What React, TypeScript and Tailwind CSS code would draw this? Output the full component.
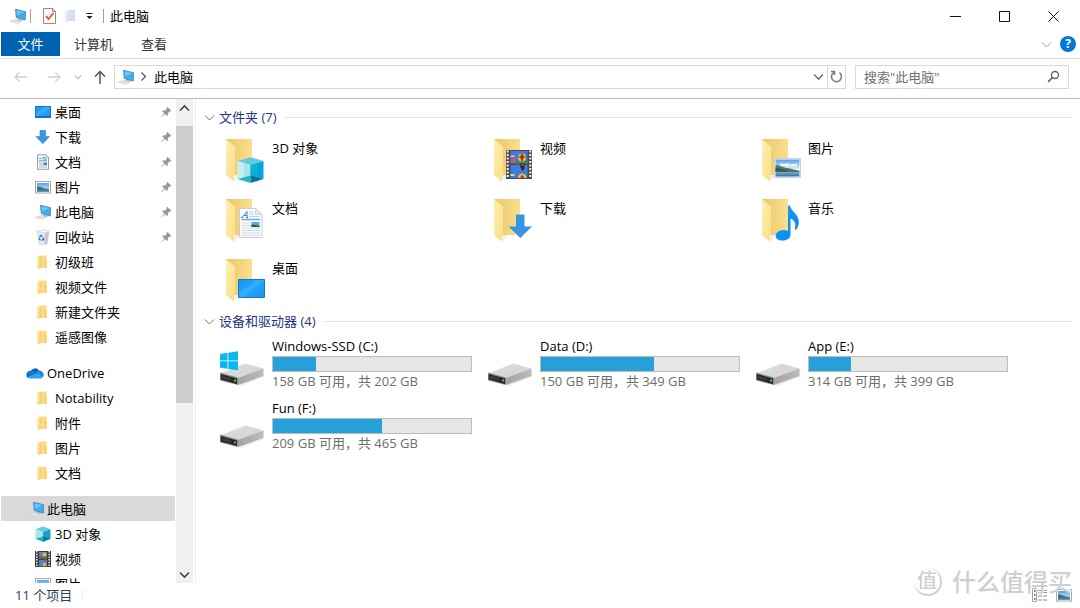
import type { ReactNode } from 'react';

type IconName =
  | 'desktop'
  | 'download'
  | 'document'
  | 'picture'
  | 'pc'
  | 'recycle'
  | 'folder'
  | 'onedrive'
  | 'cube'
  | 'video';

interface NavItem {
  label: string;
  icon: IconName;
  pinned?: boolean;
  root?: boolean;
  selected?: boolean;
}

const NAV_GROUPS: NavItem[][] = [
  [
    { label: '桌面', icon: 'desktop', pinned: true },
    { label: '下载', icon: 'download', pinned: true },
    { label: '文档', icon: 'document', pinned: true },
    { label: '图片', icon: 'picture', pinned: true },
    { label: '此电脑', icon: 'pc', pinned: true },
    { label: '回收站', icon: 'recycle', pinned: true },
    { label: '初级班', icon: 'folder' },
    { label: '视频文件', icon: 'folder' },
    { label: '新建文件夹', icon: 'folder' },
    { label: '遥感图像', icon: 'folder' },
  ],
  [
    { label: 'OneDrive', icon: 'onedrive', root: true },
    { label: 'Notability', icon: 'folder' },
    { label: '附件', icon: 'folder' },
    { label: '图片', icon: 'folder' },
    { label: '文档', icon: 'folder' },
  ],
  [
    { label: '此电脑', icon: 'pc', root: true, selected: true },
    { label: '3D 对象', icon: 'cube' },
    { label: '视频', icon: 'video' },
    { label: '图片', icon: 'picture' },
  ],
];

const DRIVES = [
  { name: 'Windows-SSD (C:)', free: 158, total: 202, system: true },
  { name: 'Data (D:)', free: 150, total: 349 },
  { name: 'App (E:)', free: 314, total: 399 },
  { name: 'Fun (F:)', free: 209, total: 465 },
];

/* ---------- small icons ---------- */

function Gradients() {
  return (
    <svg className="absolute h-0 w-0" aria-hidden="true">
      <defs>
        <linearGradient id="flap" x1="0" y1="0" x2="1" y2="1">
          <stop offset="0" stopColor="#fff0b4" />
          <stop offset="1" stopColor="#fbdc83" />
        </linearGradient>
        <linearGradient id="back" x1="0" y1="0" x2="1" y2="0">
          <stop offset="0" stopColor="#eac769" />
          <stop offset="1" stopColor="#fbdf8b" />
        </linearGradient>
        <linearGradient id="screen" x1="0" y1="0" x2="1" y2="1">
          <stop offset="0" stopColor="#1296f6" />
          <stop offset="0.5" stopColor="#27a5ff" />
          <stop offset="1" stopColor="#1590f2" />
        </linearGradient>
        <linearGradient id="sky" x1="0" y1="0" x2="0" y2="1">
          <stop offset="0" stopColor="#5b9df0" />
          <stop offset="1" stopColor="#e6f4ff" />
        </linearGradient>
        <linearGradient id="sea" x1="0" y1="0" x2="0" y2="1">
          <stop offset="0" stopColor="#8dbbd8" />
          <stop offset="1" stopColor="#336fa8" />
        </linearGradient>
        <linearGradient id="diskTop" x1="0" y1="0" x2="1" y2="1">
          <stop offset="0" stopColor="#dedee0" />
          <stop offset="1" stopColor="#d2d2d5" />
        </linearGradient>
        <linearGradient id="diskSide" x1="0" y1="0" x2="1" y2="0">
          <stop offset="0" stopColor="#a3a3a6" />
          <stop offset="1" stopColor="#bcbcbf" />
        </linearGradient>
        <linearGradient id="note" x1="0" y1="0" x2="1" y2="1">
          <stop offset="0" stopColor="#18a5ff" />
          <stop offset="1" stopColor="#0681e8" />
        </linearGradient>
      </defs>
    </svg>
  );
}

function SmallIcon({ name }: { name: IconName }) {
  return (
    <svg viewBox="0 0 16 16" className="h-4 w-4 shrink-0" aria-hidden="true">
      {name === 'desktop' && (
        <>
          <rect x="0.5" y="2.5" width="15" height="11" fill="url(#screen)" stroke="#1976c4" />
          <path d="M1 9 11 3h4L3 12H1z" fill="#4db6ff" opacity=".5" />
          <path d="M1 12.5h14" stroke="#0b6bb8" />
        </>
      )}
      {name === 'download' && (
        <path d="M5 1.500h5.500v6H14.500L7.800 14.800 1 7.500h4z" fill="#3d95e0" stroke="#2f7fc9" strokeWidth=".6" />
      )}
      {name === 'document' && (
        <>
          <path d="M2.500 .8h8.500l2.500 2.500v12H2.500z" fill="#fafafa" stroke="#9a9a9a" />
          <path d="M11 .8v2.500h2.500" fill="#ddd" stroke="#9a9a9a" strokeWidth=".6" />
          <path d="M4 4.500h2.500M7.500 3.500h2.500M7.500 5h4.500M4 6.800h8" stroke="#3fa2e0" strokeWidth="1.100" />
          <path d="M4 9h4M4 11h4M4 13h8" stroke="#a9b6c2" strokeWidth="1" />
          <rect x="8.500" y="8.400" width="3.500" height="3" fill="#3f87bd" />
        </>
      )}
      {name === 'picture' && (
        <>
          <rect x=".5" y="2.500" width="15" height="11.500" fill="#fff" stroke="#a8a8a8" />
          <rect x="2" y="4" width="12" height="8.500" fill="url(#sky)" />
          <path d="M2 7.200c3 .3 6 2 12 3V12.500H2z" fill="#3c7357" />
          <rect x="2" y="10.600" width="12" height="2" fill="#3f80b5" />
        </>
      )}
      {name === 'pc' && (
        <>
          <path d="M0 13.300 6 11.300l6.500 1.400-5 2.600z" fill="#dfe4ea" stroke="#c2c9d0" strokeWidth=".5" />
          <path d="m8 10.500 5 1.300-1.500 1.200L7 12z" fill="#b9c1c8" />
          <path d="M5.500 1.300 15.700 3.800 15.200 12 6.300 9.500z" fill="#3fadf0" stroke="#3f7da5" strokeWidth=".8" />
          <path d="M6.500 2.200 14.500 4.100 7 7.500z" fill="#7fd0ff" opacity=".7" />
        </>
      )}
      {name === 'recycle' && (
        <>
          <path d="M2 2.500 10 1l4 1.500-2 12.500-7.500.5z" fill="#e9ecef" stroke="#c3c8cc" strokeWidth=".6" />
          <path d="m10 3.500 4-1-2 12.500-3 .4z" fill="#c4cacf" />
          <path d="M2 2.500 10 1l4 1.500-4 1.300z" fill="#f8f9fa" stroke="#ccd0d4" strokeWidth=".5" />
          <path d="M4.500 8 6 6.300l1.500 1M8.200 8.500l.3 2-1.800.8M5.600 11.300l-1.300-1 .3-1.500" fill="none" stroke="#1d7fd1" strokeWidth="1.400" />
        </>
      )}
      {name === 'folder' && (
        <>
          <path d="M4 1.500h7.500V14H4z" fill="#f9db84" />
          <path d="M10 5.500h1.500V14H10z" fill="#f3cc66" />
          <path d="M2 1.500 5 2.800V15.300L2 14z" fill="url(#flap)" />
          <path d="M5 2.800V14" stroke="#e5bf5d" strokeWidth=".7" />
        </>
      )}
      {name === 'cube' && (
        <>
          <path d="m8 .5 7.500 2.800L8 6 .5 3.300z" fill="#62cbdc" />
          <path d="M.5 3.300 8 6v9.700L.5 12.800z" fill="#a9e6ee" />
          <path d="M15.500 3.300 8 6v9.700l7.500-2.900z" fill="#12a3c9" />
          <path d="m.5 12.800 7.500-2.600v5.500z" fill="#20b7c8" />
          <path d="m15.500 12.800-7.500-2.600v5.500z" fill="#087f9e" />
        </>
      )}
      {name === 'video' && (
        <>
          <path d="M0 0h16v16H0z" fill="#3a3a3a" />
          <path d="M1.800 0v16M14.200 0v16" stroke="#e8e8e8" strokeWidth="1.600" strokeDasharray="1.500 1.200" />
          <path d="M4 1h8v6.500H4zM4 9h8v6.500H4z" fill="#4a86dc" />
          <path d="M4 5.500h8v2H4z" fill="#2d8a46" />
          <circle cx="9.500" cy="3.500" r="2" fill="#f0b429" />
          <path d="M4 5h3v2H4zM9 7h2v3H9z" fill="#cf3636" />
          <circle cx="9.500" cy="13.500" r="1.800" fill="#f0b429" />
          <path d="M4 12h2v2H4z" fill="#3d9a4c" />
        </>
      )}
    </svg>
  );
}

function OneDriveIcon() {
  return (
    <svg viewBox="0 0 18 12" className="h-3 w-[18px] shrink-0" aria-hidden="true">
      <path d="M4.500 4.500A4.800 4.800 0 0 1 13 3.500L11 8 3 9z" fill="#0b63b8" />
      <path d="M4.500 3.800C2 3.800.3 5.500.3 7.800c0 1.200.5 2.200 1.200 2.900L11 6.300 7.500 4.300a4.800 4.800 0 0 0-3-.5z" fill="#1177d1" />
      <path d="M13 3.500c2.500 0 4.700 1.900 4.700 4.300 0 1-.3 1.800-.8 2.400L10 6.200c.8-1.700 1.700-2.500 3-2.700z" fill="#1989e0" />
      <path d="M1.500 10.700 10 6.200l6.900 4c-.7.900-1.700 1.300-2.900 1.300H4.300c-1.100 0-2-.2-2.800-.8z" fill="#2aa4ee" />
    </svg>
  );
}

function PinIcon() {
  return (
    <svg viewBox="0 0 11 12" className="h-3 w-[11px] shrink-0" fill="#8f9aa3" aria-hidden="true">
      <path d="M6.300.8 10.500 5 9.300 5.600 8.500 5.400 6.800 7.200 6.900 9.300 6 10 3.800 7.900.6 11.300.2 10.900 3.200 7.300 1.200 5.200 1.800 4.400 4.100 4.400 5.800 2.700 5.600 1.700z" />
    </svg>
  );
}

function Chevron({ className, dir = 'down' }: { className: string; dir?: 'down' | 'up' | 'right' }) {
  const d = {
    down: 'M1 3.500 5.500 8 10 3.500',
    up: 'M1 7.500 5.500 3 10 7.500',
    right: 'M3.500 1.500 7.500 5.500 3.500 9.500',
  }[dir];
  return (
    <svg viewBox="0 0 11 11" className={`shrink-0 ${className}`} fill="none" stroke="currentColor" aria-hidden="true">
      <path d={d} strokeWidth="inherit" />
    </svg>
  );
}

/* ---------- large icons ---------- */

function FolderIcon({ children }: { children: ReactNode }) {
  return (
    <svg viewBox="0 0 48 48" className="h-12 w-12 shrink-0" aria-hidden="true">
      <path d="M6 2h26v36H6z" fill="url(#back)" />
      <path d="m14.500 38 5 0-4.500 6z" fill="#eceef0" />
      <path d="M6 2 15 9.500V38.500L14 39v5.800L6 38z" fill="url(#flap)" />
      {children}
    </svg>
  );
}

const FOLDERS: { label: string; art: ReactNode }[] = [
  {
    label: '3D 对象',
    art: (
      <>
        <path d="M30.500 20.300 43.500 24 30.500 28 17.500 24z" fill="#5fcbdc" />
        <path d="M17.500 24 30.500 28V39.500L17.500 42z" fill="#c5eff3" />
        <path d="M24 26 30.500 28V39.500L24 40.500z" fill="#8fe0ea" opacity=".6" />
        <path d="M43.500 24 30.500 28V39.500L43.500 42z" fill="#08a3dc" />
        <path d="M37 26 30.500 28V39.500L37 40.700z" fill="#12b5cf" opacity=".7" />
        <path d="M17.500 42 30.500 38.500V46z" fill="#1bb9c4" />
        <path d="M43.500 42 30.500 38.500V46z" fill="#08778b" />
      </>
    ),
  },
  {
    label: '视频',
    art: (
      <>
        <path d="M18 13h26v29H18z" fill="#4b4b4d" />
        <path d="M19.700 13.500v28M42.300 13.500v28" stroke="#f0f0f0" strokeWidth="2" strokeDasharray="2 1.500" />
        <path d="M22.500 14h17v12.500h-17zM22.500 28h17v13h-17z" fill="#3f7ae0" />
        <path d="M22.500 23.500h17v3h-17z" fill="#2c9156" />
        <path d="M22.500 20.500h3l2 2v3h-5z" fill="#cf4c8b" />
        <path d="M22.500 18.500h4v1.500h-4zM22.500 37h4v2h-4z" fill="#e8dc57" />
        <circle cx="34" cy="20.500" r="4" fill="#f3c52c" />
        <path d="M33 16.800c-.8 2-.8 5 .3 7.500h1.400c1.100-2.500 1.100-5.500.3-7.500z" fill="#c82d2d" />
        <path d="M30.300 20h7.400" stroke="#232323" strokeWidth=".8" />
        <path d="M32.500 26.500h4v5l-1.500 2h-1l-1.500-3z" fill="#312525" />
        <path d="M33.500 27h2v2h-2z" fill="#d33" />
        <path d="M30 41c0-6 8-6 8.500 0z" fill="#f3c52c" />
        <path d="M32.500 41c0-4 3-4 3.500 0z" fill="#c82d2d" />
      </>
    ),
  },
  {
    label: '图片',
    art: (
      <>
        <path d="M18.500 21.500h26v19h-26z" fill="#fff" stroke="#cfd3d7" />
        <path d="M19.500 22.500h24v10h-24z" fill="url(#sky)" />
        <path d="M19.500 34h24v5.500h-24z" fill="url(#sea)" />
        <path d="M24 28c1-2 3-1.500 4-.8 2-2 5-1 5 .6 3-1 6-.8 8-1.500v3H24z" fill="#fff" opacity=".8" />
        <path d="M19.500 28c4 0 6.500 2 10.500 3 4 0 8 2 13.500 2.800V35h-24z" fill="#4b7d60" />
        <path d="M19.500 31c6 .5 10.500 2.500 15.500 3.500H19.500z" fill="#2e5b4b" />
      </>
    ),
  },
  {
    label: '文档',
    art: (
      <>
        <path d="M19.500 11.500h16l6.500 6V40.500H19.500z" fill="#fafafa" stroke="#c9cdd1" />
        <path d="M35.500 11.500v6H42z" fill="#e4e6e8" stroke="#c9cdd1" strokeWidth=".7" />
        <path d="M21 20.500h2M26 20.500h2M22.500 20 27 14.500v6M24 18.500h3" stroke="#2c8fd6" strokeWidth="1" fill="none" />
        <path d="M29 15h5M29 17.200h5M29 19.500h11" stroke="#b7d9f0" />
        <path d="M21.500 22.500h18.500" stroke="#62afe3" strokeWidth="1.500" />
        <path d="M21.500 26h9M21.500 28.500h9M21.500 31h18.500M21.500 33.500h18.500M21.500 36h18.500M21.500 38.300h18.500" stroke="#d5d9dd" />
        <path d="M31.500 25h8v5h-8z" fill="#58abe0" />
        <path d="M31.500 27.500c3 0 5 1 8 1.500v1h-8z" fill="#27584d" />
      </>
    ),
  },
  {
    label: '下载',
    art: <path d="M28 17.500h8.500V29.500H44L32.300 41 20.500 29.500H28z" fill="#3795e6" />,
  },
  {
    label: '音乐',
    art: (
      <path
        d="M32 8.500h2c1 6 8.800 8.500 8.800 16.500 0 3.500-1.300 6-3.300 8-.6-.3-1-.6-.8-1 2-5.500-.5-9-4.200-10.500V37.500c0 3.800-3.500 6-8 6-4 0-6.800-1.800-6.800-4.600 0-3.500 3.700-6 7.800-6 1.700 0 3.200.3 4.500 1z"
        fill="url(#note)"
      />
    ),
  },
  {
    label: '桌面',
    art: (
      <>
        <path d="M18.500 22.500h26v18h-26z" fill="url(#screen)" stroke="#1779c9" />
        <path d="M19 36 36 23h8L24 40H19z" fill="#56baff" opacity=".35" />
      </>
    ),
  },
];

function DriveIcon({ system }: { system?: boolean }) {
  return (
    <svg viewBox="0 0 48 48" className="h-12 w-12 shrink-0" aria-hidden="true">
      <path d="M18 40 44 31l2 1-26 11z" fill="#f0f0f0" />
      <path d="M0 29.500 25.500 19.500 43.500 24.500 18 34.500z" fill="url(#diskTop)" />
      <path d="M18 34 43.500 24.500V32L18 41z" fill="url(#diskSide)" />
      <path d="M0 28.500 18 33.500V41L0 36.500z" fill="#8d8d90" />
      <path d="M.8 30 17 34.500v5.500L.8 35.500z" fill="#242424" />
      <path d="m2 31.500 9 2.500v3L2 34.500z" fill="#3b3b3b" />
      <circle cx="15" cy="36.500" r="1.200" fill="#30d53c" />
      {system && (
        <path
          d="M0 10 7.500 8.800V16.500H0zM8.300 8.700 18 7.300V16.500H8.300zM0 17.300h7.500v7.500L0 23.700zM8.300 17.300H18V26.300l-9.700-1.400z"
          fill="#08b9ee"
        />
      )}
    </svg>
  );
}

/* ---------- page parts ---------- */

function TitleBar() {
  return (
    <header className="flex h-8 shrink-0 items-center justify-between pl-2.5">
      <div className="flex items-center">
        <SmallIcon name="pc" />
        <span className="mr-3 ml-1 h-3.5 w-px bg-[#a5a5a5]" />
        <button aria-label="属性">
          <svg viewBox="0 0 13 16" className="h-4 w-[13px]" fill="none">
            <path d="M.5.500h9l3 3v12H.500z" fill="#fbfbfb" stroke="#8d8d8d" />
            <path d="M9.500.500v3h3" stroke="#8d8d8d" />
            <path d="m3 8 2.500 3 5-6" stroke="#e2571f" strokeWidth="1.800" />
          </svg>
        </button>
        <button aria-label="新建文件夹" className="ml-2">
          <svg viewBox="0 0 12 16" className="h-4 w-3">
            <path d="M4 2h7v11H4z" fill="#d4e0f1" />
            <path d="m1 2 3 1v12l-3-1z" fill="#e4ecf7" />
          </svg>
        </button>
        <button aria-label="自定义快速访问工具栏" className="ml-2.5">
          <svg viewBox="0 0 7 7" className="h-[7px] w-[7px]">
            <path d="M.5 0h6v1h-6zM.5 3h6L3.500 6z" fill="#222" />
          </svg>
        </button>
        <span className="mr-1.5 ml-2.5 h-3.5 w-px bg-[#a5a5a5]" />
        <h1>此电脑</h1>
      </div>
      <div className="flex h-full pr-0.5">
        <button aria-label="最小化" className="grid w-[49px] place-items-center">
          <svg viewBox="0 0 11 11" className="h-[11px] w-[11px]" stroke="#111">
            <path d="M0 5.500h11" />
          </svg>
        </button>
        <button aria-label="最大化" className="grid w-[49px] place-items-center">
          <svg viewBox="0 0 11 11" className="h-[11px] w-[11px]" stroke="#111" fill="none">
            <path d="M.5.500h10v10H.500z" />
          </svg>
        </button>
        <button aria-label="关闭" className="grid w-[49px] place-items-center">
          <svg viewBox="0 0 11 11" className="h-[11px] w-[11px]" stroke="#111">
            <path d="m.5.500 10 10m0-10-10 10" />
          </svg>
        </button>
      </div>
    </header>
  );
}

function Ribbon() {
  return (
    <div className="flex h-[27px] shrink-0 items-start border-b border-[#dcdcdc] pl-px">
      <button className="h-6 w-[59px] bg-[#0063b1] text-white">文件</button>
      <button className="ml-3.5 h-6 text-[#333]">计算机</button>
      <button className="ml-7 h-6 text-[#333]">查看</button>
      <div className="ml-auto flex h-6 items-center gap-2 pr-1">
        <button aria-label="展开功能区">
          <Chevron className="h-[11px] w-[11px] text-[#a0a0a0]" />
        </button>
        <button
          aria-label="帮助"
          className="grid h-4 w-4 place-items-center rounded-full bg-[#0078d7] text-xs leading-4 font-bold text-white"
        >
          ?
        </button>
      </div>
    </div>
  );
}

function AddressBar() {
  return (
    <div className="flex h-10 shrink-0 items-center border-b border-[#b9b9b9] pr-[11px] pb-1 pl-3.5">
      <button aria-label="后退" className="text-[#cfcfcf]">
        <svg viewBox="0 0 14 12" className="h-3 w-3.5" fill="none" stroke="currentColor" strokeWidth="1.300">
          <path d="M13 6H1m4.500-4.500L1 6l4.500 4.500" />
        </svg>
      </button>
      <button aria-label="前进" className="ml-5 text-[#cfcfcf]">
        <svg viewBox="0 0 14 12" className="h-3 w-3.5" fill="none" stroke="currentColor" strokeWidth="1.300">
          <path d="M0 6h12M7.500 1.500 12 6l-4.500 4.500" />
        </svg>
      </button>
      <button aria-label="最近浏览的位置" className="ml-3">
        <Chevron className="h-2 w-2 stroke-[1.5] text-[#b5b5b5]" />
      </button>
      <button aria-label="上移" className="ml-3 text-[#555]">
        <svg viewBox="0 0 12 14" className="h-3.5 w-3" fill="none" stroke="currentColor" strokeWidth="1.500">
          <path d="M6 14V1.500M1 6.500l5-5 5 5" />
        </svg>
      </button>
      <div className="ml-2 flex h-6 flex-1 items-center border border-[#d9d9d9]">
        <button className="ml-[3px] flex items-center">
          <SmallIcon name="pc" />
          <Chevron dir="right" className="mr-[5px] ml-1 h-[11px] w-[11px] stroke-[1.2] text-[#555]" />
          此电脑
        </button>
        <button aria-label="以前的位置" className="ml-auto px-[3px]">
          <Chevron className="h-[11px] w-[11px] stroke-[1.6] text-[#777]" />
        </button>
        <button aria-label="刷新" className="grid h-full w-[18px] place-items-center border-l border-[#d9d9d9]">
          <svg viewBox="0 0 13 14" className="h-3.5 w-[13px]" fill="none" stroke="#777" strokeWidth="1.500">
            <path d="M9.500 2.700a5 5 0 1 1-5.500-.4" />
            <path d="M1 1.500h3.500V5" />
          </svg>
        </button>
      </div>
      <label className="ml-[9px] flex h-6 w-[214px] items-center border border-[#d9d9d9] px-2">
        <input
          type="search"
          aria-label="搜索"
          placeholder={'搜索"此电脑"'}
          className="min-w-0 flex-1 bg-transparent outline-none placeholder:text-[#707070]"
        />
        <svg viewBox="0 0 13 13" className="h-[13px] w-[13px]" fill="none" stroke="#666">
          <circle cx="8" cy="5" r="3.500" strokeWidth="1.400" />
          <path d="M5.300 7.700 1.200 11.800" strokeWidth="1.800" />
        </svg>
      </label>
    </div>
  );
}

function NavRow({ item }: { item: NavItem }) {
  const { label, icon, pinned, root, selected } = item;
  return (
    <li>
      <a
        href="#"
        className={`flex h-[25px] items-center pr-[3px] ${root ? 'pl-[25px]' : 'pl-[34px]'} ${selected ? 'bg-[#d9d9d9]' : ''}`}
      >
        {icon === 'onedrive' ? (
          <OneDriveIcon />
        ) : (
          <span className={root ? 'pl-0.5' : ''}>
            <SmallIcon name={icon} />
          </span>
        )}
        <span className={`flex-1 truncate ${root ? 'pl-[3px]' : 'pl-1'}`}>{label}</span>
        {pinned && <PinIcon />}
      </a>
    </li>
  );
}

function Sidebar() {
  return (
    <aside className="flex w-[196px] shrink-0 border-r border-[#f0f0f0] pl-px">
      <nav className="min-w-0 flex-1 overflow-hidden">
        {NAV_GROUPS.map((group, index) => (
          <ul key={index} className="mb-[11px]">
            {group.map((item, i) => (
              <NavRow key={i} item={item} />
            ))}
          </ul>
        ))}
      </nav>
      <div className="mr-0.5 ml-px flex w-[17px] flex-col bg-[#f0f0f0]">
        <button aria-label="向上滚动" className="grid h-[27px] shrink-0 place-items-start justify-center pt-1">
          <Chevron dir="up" className="h-[11px] w-[11px] stroke-[1.6] text-[#444]" />
        </button>
        <div className="min-h-0 flex-1">
          <div className="h-[63%] bg-[#cdcdcd]" />
        </div>
        <button aria-label="向下滚动" className="grid h-[18px] shrink-0 place-items-center">
          <Chevron className="h-[11px] w-[11px] stroke-[1.6] text-[#444]" />
        </button>
      </div>
    </aside>
  );
}

function SectionTitle({ title, count }: { title: string; count: number }) {
  return (
    <button className="flex h-5 w-full items-center text-[#1f3287]">
      <Chevron className="mr-1 h-[11px] w-[11px] text-[#707070]" />
      <h2>
        {title} ({count})
      </h2>
      <span className="ml-2 h-px flex-1 bg-[#e4e4e4]" />
    </button>
  );
}

function Content() {
  return (
    <main className="min-w-0 flex-1 overflow-hidden pt-2 pr-2 pl-2">
      <section>
        <SectionTitle title="文件夹" count={FOLDERS.length} />
        <ul className="mt-2.5 grid grid-cols-[repeat(auto-fill,268px)] gap-y-3 pl-4">
          {FOLDERS.map(({ label, art }) => (
            <li key={label} className="flex gap-1">
              <FolderIcon>{art}</FolderIcon>
              <span className="pt-0.5">{label}</span>
            </li>
          ))}
        </ul>
      </section>
      <section className="mt-1.5">
        <SectionTitle title="设备和驱动器" count={DRIVES.length} />
        <ul className="mt-1.5 grid grid-cols-[repeat(auto-fill,268px)] gap-y-[7px] pl-4">
          {DRIVES.map(({ name, free, total, system }) => (
            <li key={name} className="flex items-end gap-1">
              <DriveIcon system={system} />
              <div className="w-[200px] pb-0.5">
                <div className="mb-px">{name}</div>
                <div className="h-4 border border-[#bcbcbc] bg-[#e6e6e6]">
                  <div
                    className="h-full bg-[#26a0da]"
                    style={{ width: `${((total - free) / total) * 100}%` }}
                  />
                </div>
                <div className="text-[#6d6d6d]">
                  {free} GB 可用，共 {total} GB
                </div>
              </div>
            </li>
          ))}
        </ul>
      </section>
    </main>
  );
}

function StatusBar() {
  return (
    <footer className="flex h-[25px] shrink-0 items-center pr-2 pb-0.5 pl-[15px] text-[#27405f]">
      <span>11 个项目</span>
      <span className="ml-2.5 h-3 w-px bg-[#ececec]" />
      <div className="ml-auto flex gap-2">
        <button aria-label="详细信息">
          <svg viewBox="0 0 16 14" className="h-3.5 w-4" fill="none">
            <path d="M.5.500h4v13h-4z" stroke="#a5a5a5" fill="#fff" />
            <path d="M2 3h1.500" stroke="#357" strokeWidth="1.500" />
            <path d="M2 7h1.500" stroke="#553" strokeWidth="1.500" />
            <path d="M2 11h1.500" stroke="#c22" strokeWidth="1.500" />
            <path d="M6 2.500h4m1 0h4M6 4.500h4m1 0h4M6 8h4m1 0h4M6 12h4m1 0h4" stroke="#8d8d8d" />
          </svg>
        </button>
        <button aria-label="大图标">
          <SmallIcon name="picture" />
        </button>
      </div>
    </footer>
  );
}

function Watermark() {
  return (
    <div className="pointer-events-none absolute right-2 bottom-3 flex items-center gap-2.5 font-medium text-[#cfcfcf] select-none [text-shadow:1px_-1px_0_#fff]">
      <span className="grid h-7 w-7 place-items-center rounded-full border-r-2 border-b-2 border-[#cfcfcf] text-xl leading-5">
        值
      </span>
      <span className="text-2xl leading-7">什么值得买</span>
    </div>
  );
}

export default function App() {
  return (
    <div className="relative flex h-screen flex-col overflow-hidden bg-white font-['Open_Sans','Noto_Sans_CJK_SC',sans-serif] text-[13px] leading-[18px] text-black">
      <Gradients />
      <TitleBar />
      <Ribbon />
      <AddressBar />
      <div className="flex min-h-0 flex-1">
        <Sidebar />
        <Content />
      </div>
      <StatusBar />
      <Watermark />
    </div>
  );
}
